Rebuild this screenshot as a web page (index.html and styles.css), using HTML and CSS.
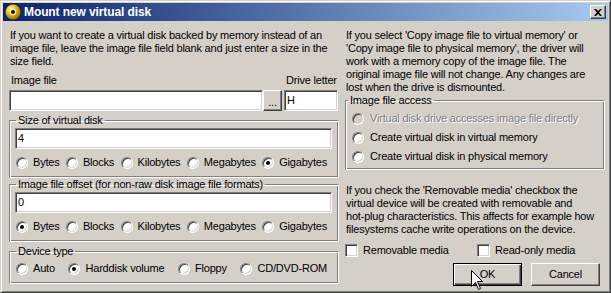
FILE: index.html
```html
<!DOCTYPE html>
<html lang="en">
<head>
    <meta charset="UTF-8">
    <meta name="viewport" content="width=device-width, initial-scale=1.0">
    <title>Mount new virtual disk</title>
    <link rel="stylesheet" href="styles.css">
</head>
<body>
    <div class="window">
        <div class="titlebar">
            <svg class="app-icon" width="16" height="16" viewBox="0 0 16 16">
                <defs>
                    <radialGradient id="disc" cx="0.35" cy="0.3" r="0.75">
                        <stop offset="0" stop-color="#fff4a0"/>
                        <stop offset="0.45" stop-color="#f2c200"/>
                        <stop offset="1" stop-color="#9a6a00"/>
                    </radialGradient>
                </defs>
                <circle cx="8" cy="8" r="7.5" fill="url(#disc)"/>
                <circle cx="8" cy="8" r="3.2" fill="#f4f0d0"/>
                <circle cx="8" cy="8" r="2" fill="#101028"/>
            </svg>
            <span class="title">Mount new virtual disk</span>
            <span class="close-btn">
                <svg width="8" height="7" viewBox="0 0 8 7">
                    <path d="M0 0h2l2 2 2-2h2L5 3.5 8 7H6L4 5 2 7H0l3-3.5z" fill="#000"/>
                </svg>
            </span>
        </div>

        <div class="client">
            <div class="col-left">
                <p class="text">If you want to create a virtual disk backed by memory instead of an<br>image file, leave the image file field blank and just enter a size in the<br>size field.</p>

                <div class="file-labels">
                    <div class="label file-label">Image file</div>
                    <div class="label drive-label">Drive letter</div>
                </div>
                <div class="file-row">
                    <div class="edit file-edit"></div>
                    <div class="btn browse">...</div>
                    <div class="edit drive-edit">H</div>
                </div>

                <fieldset class="group">
                    <legend>Size of virtual disk</legend>
                    <div class="edit">4</div>
                    <div class="radio-row">
                        <label class="opt"><span class="radio"></span>Bytes</label>
                        <label class="opt"><span class="radio"></span>Blocks</label>
                        <label class="opt"><span class="radio"></span>Kilobytes</label>
                        <label class="opt"><span class="radio"></span>Megabytes</label>
                        <label class="opt"><span class="radio on"></span>Gigabytes</label>
                    </div>
                </fieldset>

                <fieldset class="group">
                    <legend>Image file offset (for non-raw disk image file formats)</legend>
                    <div class="edit">0</div>
                    <div class="radio-row">
                        <label class="opt"><span class="radio on"></span>Bytes</label>
                        <label class="opt"><span class="radio"></span>Blocks</label>
                        <label class="opt"><span class="radio"></span>Kilobytes</label>
                        <label class="opt"><span class="radio"></span>Megabytes</label>
                        <label class="opt"><span class="radio"></span>Gigabytes</label>
                    </div>
                </fieldset>

                <fieldset class="group device">
                    <legend>Device type</legend>
                    <div class="radio-row">
                        <label class="opt"><span class="radio"></span>Auto</label>
                        <label class="opt"><span class="radio on"></span>Harddisk volume</label>
                        <label class="opt"><span class="radio"></span>Floppy</label>
                        <label class="opt"><span class="radio"></span>CD/DVD-ROM</label>
                    </div>
                </fieldset>
            </div>

            <div class="col-right">
                <p class="text">If you select 'Copy image file to virtual memory' or<br>'Copy image file to physical memory', the driver will<br>work with a memory copy of the image file. The<br>original image file will not change. Any changes are<br>lost when the drive is dismounted.</p>

                <fieldset class="group access">
                    <legend>Image file access</legend>
                    <label class="opt access-opt disabled"><span class="radio"></span>Virtual disk drive accesses image file directly</label>
                    <label class="opt access-opt"><span class="radio"></span>Create virtual disk in virtual memory</label>
                    <label class="opt access-opt"><span class="radio"></span>Create virtual disk in physical memory</label>
                </fieldset>

                <p class="text removable-note">If you check the 'Removable media' checkbox the<br>virtual device will be created with removable and<br>hot-plug characteristics. This affects for example how<br>filesystems cache write operations on the device.</p>

                <div class="check-row">
                    <label class="check-item first"><span class="checkbox"></span>Removable media</label>
                    <label class="check-item"><span class="checkbox"></span>Read-only media</label>
                </div>

                <div class="button-row">
                    <div class="btn push default">OK</div>
                    <div class="btn push">Cancel</div>
                </div>
            </div>
        </div>

        <svg class="cursor" width="13" height="21" viewBox="0 0 13 21">
            <path d="M0.5 0.5V16.5L4.5 12.5L7.5 19.5L9.5 18.5L6.5 11.5H11.5Z" fill="#fff" stroke="#000" stroke-linejoin="miter"/>
        </svg>
    </div>
</body>
</html>
```

FILE: styles.css
```css
* {
    margin: 0;
    padding: 0;
    box-sizing: border-box;
}

body {
    background-color: #d4d0c8;
    font-family: 'Liberation Sans', Arial, sans-serif;
    font-size: 11px;
    line-height: 13px;
    letter-spacing: -0.2px;
    color: #000;
}

.window {
    position: relative;
    width: 611px;
    height: 293px;
    background-color: #d4d0c8;
    border: 1px solid;
    border-color: #d4d0c8 #404040 #404040 #d4d0c8;
    box-shadow: inset 1px 1px #fff, inset -1px -1px #808080;
    padding: 2px;
}

.titlebar {
    height: 18px;
    display: flex;
    align-items: center;
    padding: 0 2px;
    background: linear-gradient(to right, #0a246a, #a6caf0);
}

.app-icon {
    flex: none;
    margin-right: 3px;
}

.title {
    flex: 1;
    color: #fff;
    font-weight: 700;
    font-size: 12px;
    letter-spacing: -0.1px;
}

.close-btn {
    width: 16px;
    height: 14px;
    display: flex;
    align-items: center;
    justify-content: center;
    background-color: #d4d0c8;
    border: 1px solid;
    border-color: #fff #404040 #404040 #fff;
    box-shadow: inset -1px -1px #808080;
}

.client {
    display: flex;
    gap: 6px;
    padding: 8px 3px 0 6px;
}

.col-left {
    width: 330px;
    flex: none;
}

.col-right {
    width: 260px;
    flex: none;
}

.text {
    white-space: nowrap;
    padding-left: 1px;
}

/* image file + drive letter */
.file-labels {
    display: flex;
    margin-top: 6px;
}

.file-label {
    width: 275px;
    padding-left: 2px;
}

.drive-label {
    white-space: nowrap;
    padding-left: 2px;
}

.file-row {
    display: flex;
    margin-top: 3px;
}

.edit {
    height: 21px;
    background-color: #fff;
    border: 1px solid;
    border-color: #808080 #fff #fff #808080;
    box-shadow: inset 1px 1px #404040, inset -1px -1px #d4d0c8;
    padding-left: 2px;
    line-height: 19px;
}

.file-edit {
    width: 254px;
}

.drive-edit {
    width: 54px;
    margin-left: 2px;
}

.btn {
    display: flex;
    align-items: center;
    justify-content: center;
    background-color: #d4d0c8;
    border: 1px solid;
    border-color: #fff #404040 #404040 #fff;
    box-shadow: inset -1px -1px #808080;
}

.browse {
    width: 19px;
    height: 21px;
    padding-top: 3px;
}

/* group boxes */
.group {
    border: 1px solid;
    border-color: #808080 #fff #fff #808080;
    box-shadow: inset 1px 1px #fff, inset -1px -1px #808080;
    padding: 1px 6px 8px 5px;
    margin-top: 3px;
}

.group + .group {
    margin-top: 0;
}

.group.device {
    margin-top: 3px;
    padding-top: 4px;
}

.group legend {
    padding: 0 2px;
    margin-left: 1px;
    line-height: 13px;
}

.radio-row {
    display: flex;
    justify-content: space-between;
    align-items: center;
    height: 13px;
    padding: 0 5px 0 1px;
}

.group .edit + .radio-row {
    margin-top: 7px;
}

.opt {
    display: flex;
    align-items: center;
    gap: 5px;
    white-space: nowrap;
}

.radio {
    position: relative;
    flex: none;
    width: 12px;
    height: 12px;
    border-radius: 50%;
    border: 1px solid;
    border-color: #808080 #fff #fff #808080;
    box-shadow: inset 1px 1px #404040, inset -1px -1px #d4d0c8;
    background-color: #fff;
}

.radio.on::after {
    content: '';
    position: absolute;
    left: 3px;
    top: 3px;
    width: 4px;
    height: 4px;
    border-radius: 50%;
    background-color: #000;
}

.access {
    margin-top: 0;
    padding: 2px 6px 3px 6px;
}

.access legend {
    margin-left: -4px;
}

.access-opt {
    height: 19px;
    gap: 6px;
}

.disabled {
    color: #808080;
    text-shadow: 1px 1px #fff;
}

.disabled .radio {
    background-color: #d4d0c8;
}

.removable-note {
    margin-top: 14px;
}

.check-row {
    display: flex;
    height: 13px;
    margin-top: 8px;
}

.check-item {
    display: flex;
    align-items: center;
    gap: 5px;
    white-space: nowrap;
}

.check-item.first {
    width: 132px;
}

.checkbox {
    flex: none;
    width: 13px;
    height: 13px;
    background-color: #fff;
    border: 1px solid;
    border-color: #808080 #fff #fff #808080;
    box-shadow: inset 1px 1px #404040, inset -1px -1px #d4d0c8;
}

.button-row {
    display: flex;
    justify-content: flex-end;
    gap: 9px;
    margin-top: 6px;
    padding-right: 5px;
}

.push {
    width: 69px;
    height: 23px;
}

.push.default {
    border-color: #000;
    box-shadow: inset 1px 1px #fff, inset -1px -1px #404040, inset -2px -2px #808080;
}

.cursor {
    position: absolute;
    left: 470px;
    top: 269px;
}
```
